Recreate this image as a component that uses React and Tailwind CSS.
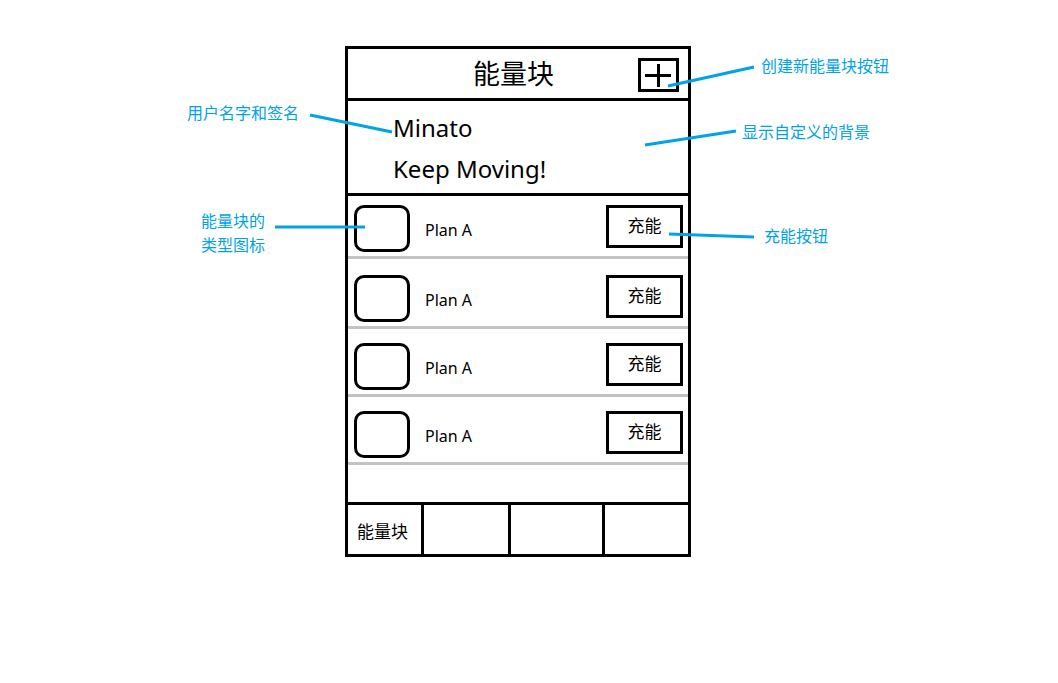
import React from "react";

const font = { fontFamily: '"Noto Sans", "Noto Sans CJK SC", sans-serif' };

// row heights include the 3px grey rule at the bottom
const rows = [
  { h: "h-[63px]", pt: "pt-[9px]" },
  { h: "h-[70px]", pt: "pt-[16px]" },
  { h: "h-[68px]", pt: "pt-[14px]" },
  { h: "h-[68px]", pt: "pt-[14px]" },
];

const notes = [
  { text: "创建新能量块按钮", cls: "left-[761px] top-[57px]" },
  { text: "显示自定义的背景", cls: "left-[742px] top-[123px]" },
  { text: "充能按钮", cls: "left-[764px] top-[227px]" },
  { text: "用户名字和签名", cls: "left-[187px] top-[104px]" },
  { text: "能量块的", cls: "left-[201px] top-[212px]" },
  { text: "类型图标", cls: "left-[201px] top-[236px]" },
];

function PlanRow({ h, pt }) {
  return (
    <div className={`${h} ${pt} flex items-start border-b-[3px] border-[#c3c3c3] pl-[6px] pr-[5px]`}>
      <div className="w-[56px] h-[47px] border-[3px] border-black rounded-[10px] shrink-0" />
      <span className="ml-[15px] mt-[15px] text-[16px] leading-[20px] text-black">Plan A</span>
      <button className="ml-auto w-[77px] h-[43px] border-[3px] border-black flex items-center justify-center pb-[2px] text-[17px] leading-none text-black">
        充能
      </button>
    </div>
  );
}

export default function App() {
  return (
    <div className="relative w-[1058px] h-[683px] overflow-hidden bg-white pt-[46px] pl-[345px]" style={font}>
      {/* phone frame */}
      <div className="w-[346px] border-[3px] border-black flex flex-col">
        {/* header */}
        <div className="h-[52px] grid grid-cols-[1fr_auto_1fr] items-center border-b-[3px] border-black">
          <div />
          <h1 className="mr-[9px] text-[27px] leading-none text-black">能量块</h1>
          <div className="flex justify-end pr-[9px] pt-[3px]">
            <button className="w-[41px] h-[34px] border-[3px] border-black">
              <svg width="35" height="28" viewBox="0 0 35 28">
                <path d="M4 14.5H30M17.5 3V26" stroke="black" strokeWidth="3" fill="none" />
              </svg>
            </button>
          </div>
        </div>

        {/* profile */}
        <div className="h-[95px] pt-[6px] pl-[45px] border-b-[3px] border-black text-[24px] leading-[41px] text-black">
          <p>Minato</p>
          <p>Keep Moving!</p>
        </div>

        {/* list */}
        <div className="h-[306px] flex flex-col">
          {rows.map((r, i) => (
            <PlanRow key={i} h={r.h} pt={r.pt} />
          ))}
        </div>

        {/* tab bar */}
        <div className="h-[52px] flex border-t-[3px] border-black">
          <div className="w-[73px] flex items-center pl-[9px] pt-[3px] text-[17px] leading-none text-black">能量块</div>
          <div className="w-[87px] border-l-[3px] border-black" />
          <div className="w-[94px] border-l-[3px] border-black" />
          <div className="flex-1 border-l-[3px] border-black" />
        </div>
      </div>

      {/* annotation lines */}
      <svg className="absolute inset-0 pointer-events-none" width="1058" height="683">
        <g stroke="#00a2e8" strokeWidth="3" fill="none">
          <path d="M668 86L754 67" />
          <path d="M645 145L736 131" />
          <path d="M669 234L754 237" />
          <path d="M310 115L392 132" />
          <path d="M275 227L365 227" />
        </g>
      </svg>

      {/* annotation labels */}
      {notes.map((n) => (
        <span key={n.text} className={`absolute ${n.cls} text-[16px] leading-[18px] text-[#00a2e8] whitespace-nowrap`}>
          {n.text}
        </span>
      ))}
    </div>
  );
}
